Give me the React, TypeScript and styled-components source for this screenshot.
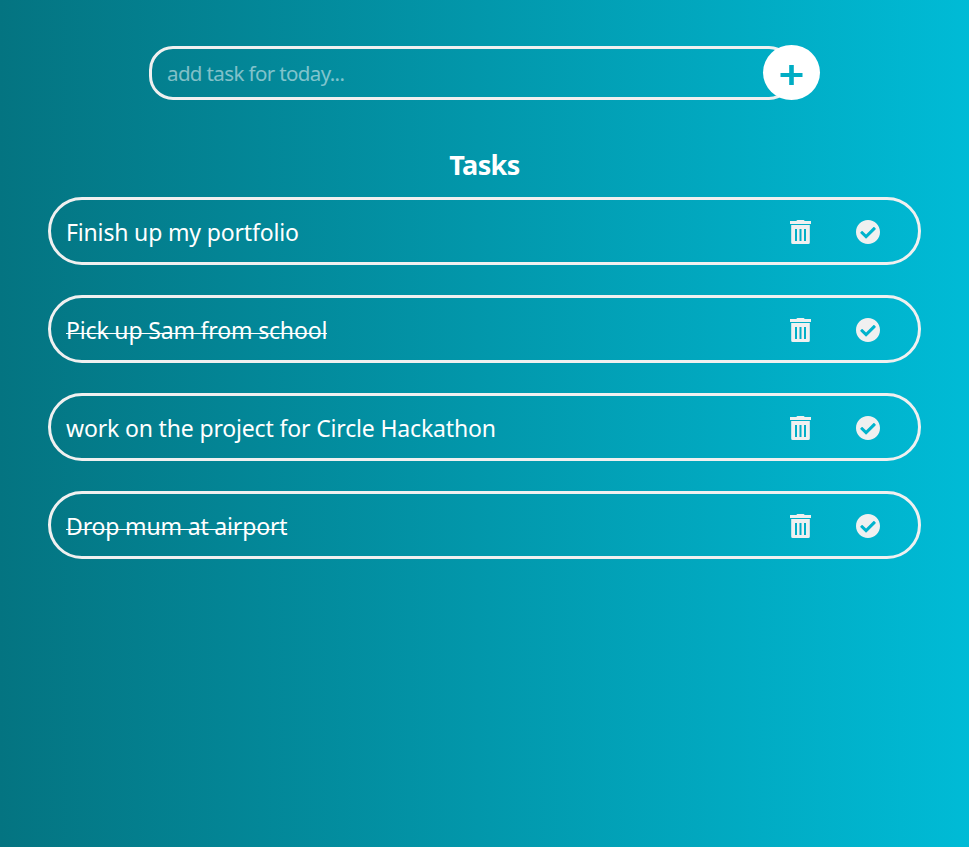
import React from 'react';
import styled, { createGlobalStyle } from 'styled-components';

const GlobalStyle = createGlobalStyle`
  * { box-sizing: border-box; }
  body { margin: 0; }
`;

const Page = styled.main`
  min-height: 847px;
  padding: 45px 48px 0;
  background: linear-gradient(to right, #047481, #00bbd6);
  font-family: 'Segoe UI', 'Noto Sans', sans-serif;
  color: #fff;
`;

const AddForm = styled.form`
  display: flex;
  align-items: center;
  width: 671px;
  height: 55px;
  margin: 0 auto;
`;

const TaskInput = styled.input`
  flex: 1;
  min-width: 0;
  height: 54px;
  margin-top: 1px;
  margin-right: -30px;
  padding: 0 15px 1px;
  border: 3px solid #f0f0f0;
  border-radius: 24px;
  background: transparent;
  color: #fff;
  outline: none;
  font: 20.5px 'Segoe UI', 'Noto Sans', sans-serif;
  letter-spacing: -0.62px;
  &::placeholder { color: rgba(255, 255, 255, 0.5); opacity: 1; }
`;

const AddButton = styled.button`
  display: flex;
  align-items: center;
  justify-content: center;
  z-index: 1;
  width: 57px;
  height: 55px;
  padding: 4px 0 0;
  border: 0;
  border-radius: 50%;
  background: #fff;
  color: #00adc4;
`;

const Heading = styled.h1`
  height: 36px;
  margin: 47px 0 14px;
  text-align: center;
  font-size: 27px;
  line-height: 36px;
  font-weight: 700;
  letter-spacing: -0.6px;
`;

const TaskList = styled.ul`
  display: flex;
  flex-direction: column;
  gap: 30px;
  margin: 0;
  padding: 0;
  list-style: none;
`;

const TaskRow = styled.li`
  display: flex;
  align-items: center;
  height: 68px;
  padding: 0 38px 0 15px;
  border: 3px solid #f0f0f0;
  border-radius: 34px;
`;

const TaskText = styled.div`
  flex: 1;
  padding-top: 2px;
  font-size: 23px;
  line-height: 32px;
`;

const Label = styled.span<{ $done: boolean }>`
  letter-spacing: -0.16px;
  background: ${({ $done }) =>
    $done ? 'linear-gradient(#fff, #fff) 0 19px / 100% 1px no-repeat' : 'none'};
`;

const Actions = styled.div`
  display: flex;
  gap: 44px;
  padding-top: 2px;
`;

const IconButton = styled.button`
  display: flex;
  padding: 0;
  border: 0;
  background: none;
  color: #f0f0f0;
`;

const PlusIcon = () => (
  <svg width="23" height="20" viewBox="0 0 23 20" fill="currentColor" aria-hidden="true">
    <path d="M9.200 0h4.600v8H22.500v4h-8.700v8H9.200v-8H.5V8h8.700z" />
  </svg>
);

const TrashIcon = () => (
  <svg width="22" height="24" viewBox="0 0 22 24" fill="currentColor" aria-hidden="true">
    <path d="M7.500 0h6q1 0 1 1H21v3H0V1h6.500q0-1 1-1zM1.200 5h18.600V22.500q0 1.500-1.500 1.500H2.700q-1.500 0-1.500-1.500zM5 9v12h2V9zm4.500 0v12h2V9zM14 9v12h2V9z" fillRule="evenodd" />
  </svg>
);

const CheckIcon = () => (
  <svg width="24" height="24" viewBox="8 8 496 496" fill="currentColor" aria-hidden="true">
    <path d="M504 256c0 136.967-111.033 248-248 248S8 392.967 8 256 119.033 8 256 8s248 111.033 248 248zM227.314 387.314l184-184c6.248-6.248 6.248-16.379 0-22.627l-22.627-22.627c-6.248-6.249-16.379-6.249-22.628 0L216 308.118l-70.059-70.059c-6.248-6.248-16.379-6.248-22.628 0l-22.627 22.627c-6.248 6.248-6.248 16.379 0 22.627l104 104c6.249 6.249 16.379 6.249 22.628.001z" />
  </svg>
);

const tasks = [
  { text: 'Finish up my portfolio', done: false },
  { text: 'Pick up Sam from school', done: true },
  { text: 'work on the project for Circle Hackathon', done: false },
  { text: 'Drop mum at airport', done: true },
];

export default function App() {
  return (
    <Page>
      <GlobalStyle />
      <AddForm onSubmit={(event) => event.preventDefault()}>
        <TaskInput placeholder="add task for today..." />
        <AddButton type="submit" aria-label="Add task"><PlusIcon /></AddButton>
      </AddForm>
      <Heading>Tasks</Heading>
      <TaskList>
        {tasks.map(({ text, done }) => (
          <TaskRow key={text}>
            <TaskText><Label $done={done}>{text}</Label></TaskText>
            <Actions>
              <IconButton aria-label="Delete task"><TrashIcon /></IconButton>
              <IconButton aria-label="Complete task"><CheckIcon /></IconButton>
            </Actions>
          </TaskRow>
        ))}
      </TaskList>
    </Page>
  );
}
